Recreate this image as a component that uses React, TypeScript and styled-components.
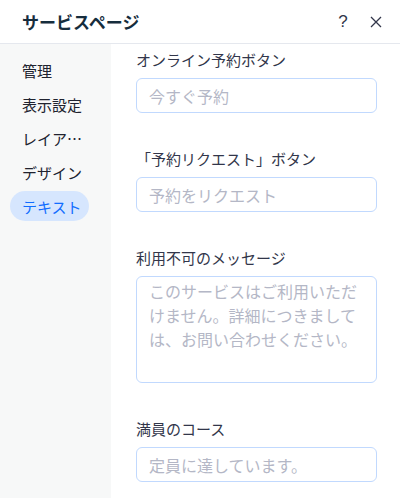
import styled, { createGlobalStyle } from 'styled-components';

const GlobalStyle = createGlobalStyle`
  html, body {
    margin: 0;
    padding: 0;
    background: #ffffff;
  }
  body {
    font-family: 'Noto Sans CJK JP', 'Noto Sans', sans-serif;
    color: #20303c;
  }
  * {
    box-sizing: border-box;
  }
`;

const Panel = styled.div`
  width: 400px;
  height: 498px;
  display: flex;
  flex-direction: column;
  overflow: hidden;
  background: #ffffff;
`;

const Header = styled.div`
  height: 44px;
  flex-shrink: 0;
  display: flex;
  align-items: center;
  padding: 0 12px 0 22px;
  border-bottom: 1px solid #e5e8ee;
`;

const Title = styled.h1`
  margin: 0;
  flex: 1;
  font-size: 17px;
  font-weight: 700;
  color: #162d3d;
  line-height: 1;
`;

const IconButton = styled.button`
  width: 24px;
  height: 24px;
  margin-left: 9px;
  padding: 0;
  border: none;
  background: none;
  display: flex;
  align-items: center;
  justify-content: center;
  color: #32364a;
  font-family: 'Liberation Sans', sans-serif;
  font-size: 17px;
  cursor: pointer;
`;

const Body = styled.div`
  flex: 1;
  display: flex;
  min-height: 0;
`;

const Sidebar = styled.nav`
  width: 111px;
  flex-shrink: 0;
  background: #f7f8f8;
  padding: 11px 10px 0;
  display: flex;
  flex-direction: column;
  gap: 4px;
`;

const NavItem = styled.div<{ $active?: boolean }>`
  height: 30px;
  display: flex;
  align-items: center;
  padding: 0 12px;
  border-radius: 15px;
  font-size: 15px;
  white-space: nowrap;
  color: ${(p) => (p.$active ? '#116dff' : '#20232f')};
  background: ${(p) => (p.$active ? '#d6e6fe' : 'transparent')};
  width: ${(p) => (p.$active ? '79px' : 'auto')};
`;

const Content = styled.div`
  flex: 1;
  padding: 4px 23px 0 25px;
  display: flex;
  flex-direction: column;
  gap: 34px;
`;

const Field = styled.div`
  display: flex;
  flex-direction: column;
`;

const Label = styled.label`
  font-size: 15px;
  line-height: 24px;
  color: #32364a;
  margin-bottom: 6px;
`;

const Input = styled.div<{ $rows?: number }>`
  height: ${(p) => (p.$rows ? '107px' : '35px')};
  border: 1px solid #c1d9fe;
  border-radius: 6px;
  padding: ${(p) => (p.$rows ? '2px 12px' : '0 12px')};
  display: flex;
  align-items: ${(p) => (p.$rows ? 'flex-start' : 'center')};
  font-size: 16px;
  line-height: 24px;
  color: #b4b7c6;
`;

const navItems = ['管理', '表示設定', 'レイア…', 'デザイン', 'テキスト'];

const fields = [
  { label: 'オンライン予約ボタン', placeholder: '今すぐ予約' },
  { label: '「予約リクエスト」ボタン', placeholder: '予約をリクエスト' },
  {
    label: '利用不可のメッセージ',
    placeholder: 'このサービスはご利用いただけません。詳細につきましては、お問い合わせください。',
    rows: 4,
  },
  { label: '満員のコース', placeholder: '定員に達しています。' },
];

export default function App() {
  return (
    <>
      <GlobalStyle />
      <Panel>
        <Header>
          <Title>サービスページ</Title>
          <IconButton aria-label="help">?</IconButton>
          <IconButton aria-label="close">
            <svg width="12" height="12" viewBox="0 0 12 12">
              <path d="M1 1L11 11M11 1L1 11" stroke="currentColor" strokeWidth="1.3" />
            </svg>
          </IconButton>
        </Header>
        <Body>
          <Sidebar>
            {navItems.map((item) => (
              <NavItem key={item} $active={item === 'テキスト'}>
                {item}
              </NavItem>
            ))}
          </Sidebar>
          <Content>
            {fields.map((f) => (
              <Field key={f.label}>
                <Label>{f.label}</Label>
                <Input $rows={f.rows}>{f.placeholder}</Input>
              </Field>
            ))}
          </Content>
        </Body>
      </Panel>
    </>
  );
}
